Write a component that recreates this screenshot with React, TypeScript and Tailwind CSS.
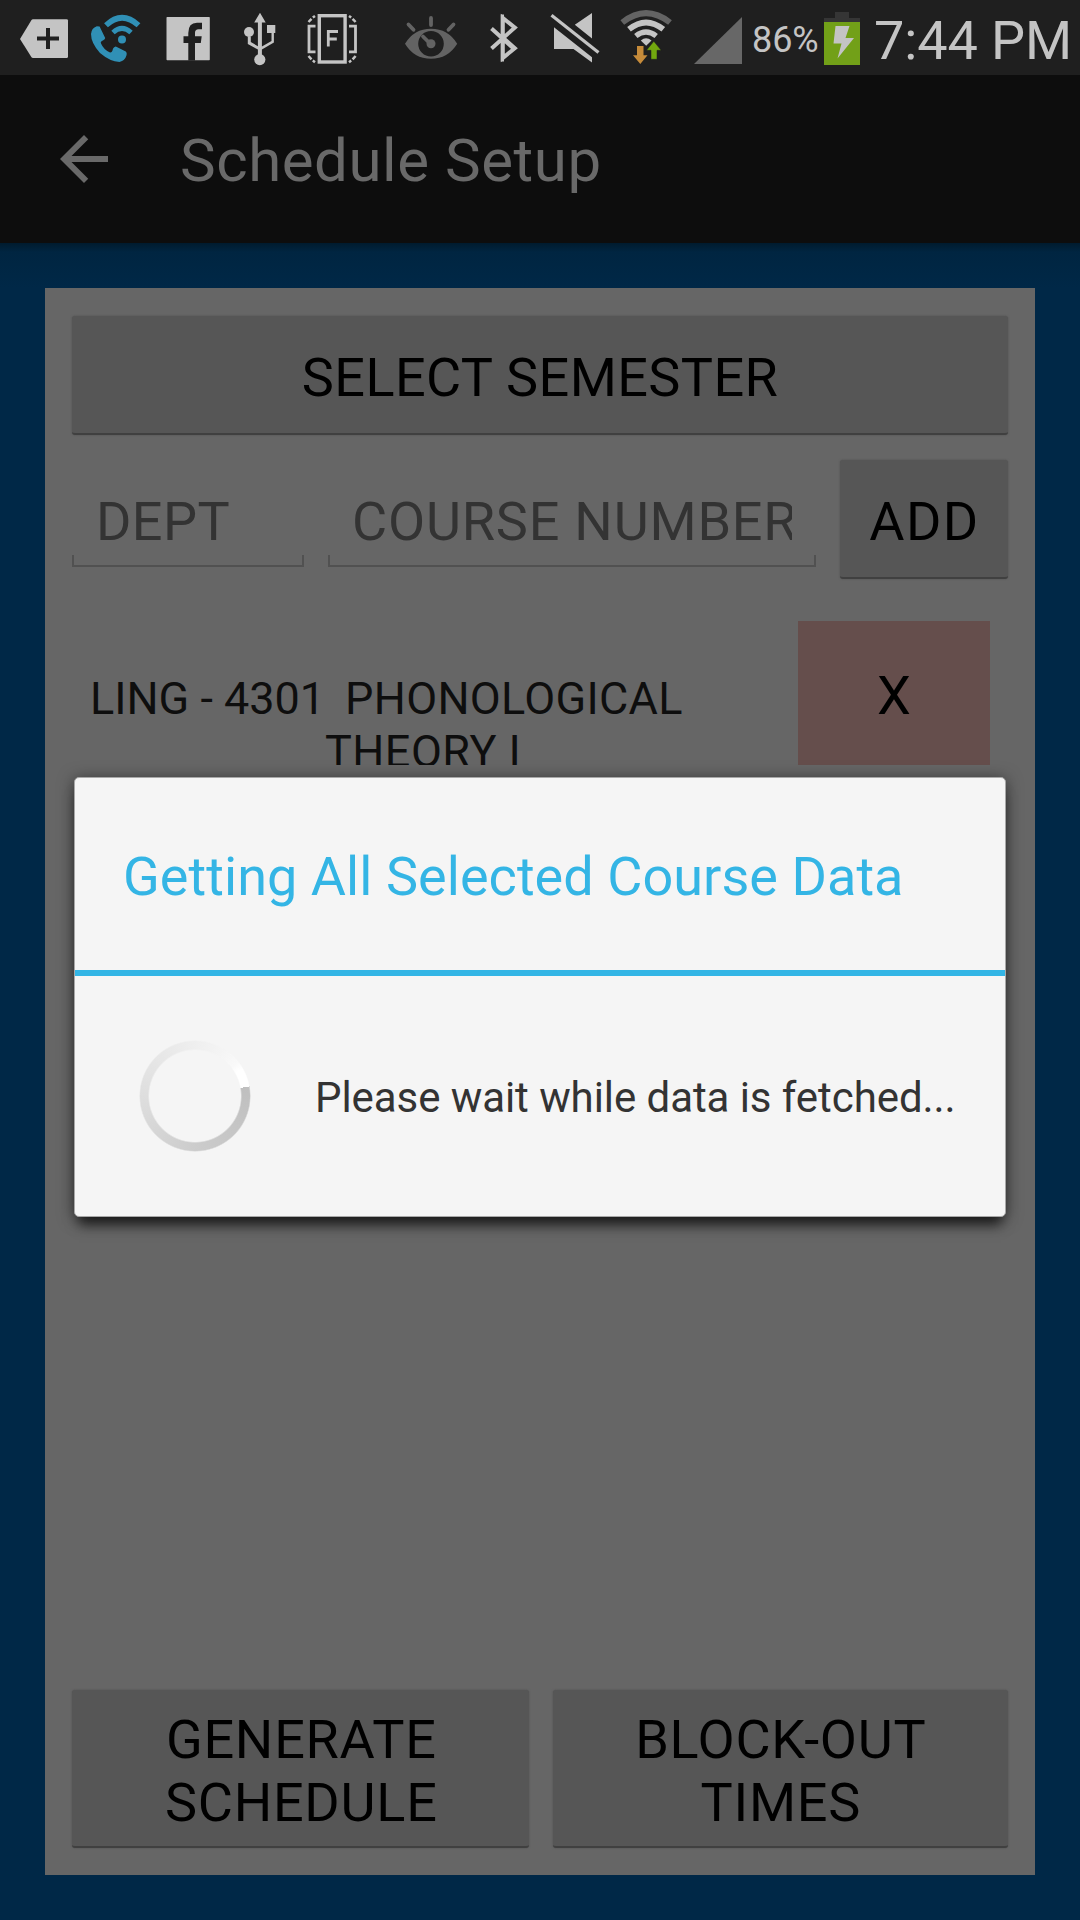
import type { ReactNode } from "react";

function Icon({ w, x, children }: { w: number; x: number; children: ReactNode }) {
  return (
    <svg width={w} height={75} viewBox={`${x} 0 ${w} 75`} className="block shrink-0" fill="#c4c4c4">
      {children}
    </svg>
  );
}

function StatusBar() {
  return (
    <div className="flex h-[75px] shrink-0 items-center bg-[#1f1f1f] pl-[14px]">
      <Icon x={14} w={68}>
        <path d="M20 39 L31.5 20 Q32 19.3 33 19.3 H66.5 Q68 19.3 68 20.5 V56.5 Q68 58 66.5 58 H33 Q32 58 31.5 57.3 Z" />
        <path d="M37 36.6H46V28H50V36.6H59V40.6H50V49H46V40.6H37Z" fill="#1f1f1f" />
      </Icon>
      <Icon x={82} w={68}>
        <g fill="#3090b6">
          <path d="M96.8 26.2 L99.6 26.6 L105.2 38 Q105 39.3 103.3 40.3 Q100 41.5 101 43.5 Q103.5 49.3 109.5 52.3 Q111.7 53 112.5 50.5 Q113.2 47 115.8 46.6 L125.8 51.5 Q127.2 52.5 126.6 55 Q125 60.8 119.5 62 Q110 61.5 100 53 Q91 43 91 34 Q91.5 28 96.8 26.2Z" />
          <circle cx="122" cy="39.4" r="4" />
        </g>
        <path d="M113 32.5 Q122 24.4 131 32.5" fill="none" stroke="#3090b6" strokeWidth="5" />
        <path d="M106 25.2 Q122 10.2 138.5 25.2" fill="none" stroke="#3090b6" strokeWidth="5.6" />
      </Icon>
      <Icon x={150} w={78}>
        <rect x="166.5" y="17" width="43.3" height="43.3" rx="0.7" />
        <path d="M188.3 60.5V43H183.5V36.2H188.3V33Q188.3 22.8 197 22.8H202V29.2H198.5Q195 29.2 195 32.8V36.2H201.7L200.8 43H195V60.5Z" fill="#1f1f1f" />
      </Icon>
      <Icon x={228} w={72}>
        <path d="M260 12.8L265.7 22.5H261.9V46.5L271.5 41V33H267V25H275.3V33H273.9V42.6L261.9 49.6V55H257.9V49.6L247.8 44V36.5H250.8V42L257.9 46.2V22.5H254.2Z" />
        <circle cx="249" cy="32" r="5" />
        <circle cx="259.8" cy="59.6" r="5.6" />
      </Icon>
      <Icon x={300} w={100}>
        <g fill="none" stroke="#c4c4c4">
          <rect x="319.3" y="15.7" width="25.8" height="46.3" strokeWidth="3.4" />
          <path d="M315.5 26.2H309V51.8H315.5M349 26.2H355.5V51.8H349" strokeWidth="2.8" />
          <path d="M308.5 22L311.5 18.8M312.8 17.6L315 16M349 16L351.2 17.6M352.6 18.8L355.6 22M308.5 56L311.5 59.4M312.8 60.6L315 62.2M349 62.2L351.2 60.6M352.6 59.4L355.6 56" strokeWidth="2.5" />
        </g>
        <path d="M328.3 46.5V31.5H338M328.3 39H336.8" fill="none" stroke="#c4c4c4" strokeWidth="2.8" />
      </Icon>
      <Icon x={400} w={80}>
        <g fill="#636363">
          <path fillRule="evenodd" d="M405 43.8Q414 28.8 431 28.8T457.2 43.8Q448 58.8 431 58.8T405 43.8ZM431 31A12.8 12.8 0 1 0 431 56.6A12.8 12.8 0 1 0 431 31Z" />
          <circle cx="431" cy="43.8" r="4.5" />
          <path d="M423 36.5L428 41.5M431 18V25M408.5 24.5L413.5 29.8M453.5 24.5L448.5 29.8" stroke="#636363" strokeWidth="3.8" strokeLinecap="round" />
        </g>
      </Icon>
      <Icon x={480} w={60}>
        <path d="M491.5 28.5L512.8 47.8M491.5 48.5L514.8 27.5L502.8 18V58L514.8 48.2L501 36" fill="none" stroke="#c4c4c4" strokeWidth="4" />
        <path d="M500.8 14.5H504V61.5H500.8Z" />
      </Icon>
      <Icon x={540} w={70}>
        <path d="M592 13V38.5L574.8 24.8ZM554 27.3L592 57.2V62.5L573.5 49H554Z" />
        <path d="M551.5 15.3L598.5 52.5" stroke="#c4c4c4" strokeWidth="3.2" />
      </Icon>
      <Icon x={610} w={74}>
        <g fill="none" stroke="#c4c4c4">
          <path d="M622.3 22.5Q646 3.8 670 22.5" stroke="#636363" strokeWidth="6" />
          <path d="M629 29.3Q646 15.5 663.3 29.3" strokeWidth="5.8" />
          <path d="M635.8 36Q646 28 656.2 36" strokeWidth="5.4" />
        </g>
        <path d="M640.8 40.5Q646 36.2 651.5 40.5L646.2 45.8Z" />
        <path d="M637 46H643.5V55.3H647.5L640.3 64L633 55.3H637Z" fill="#c68b3a" />
        <path d="M651 59.3V50.3H646.5L653.8 41.3L661.2 50.3H657V59.3Z" fill="#72a70f" stroke="#1f1f1f" strokeWidth="0.5" />
      </Icon>
      <Icon x={684} w={68}>
        <path d="M694 64L742 17V64Z" fill="#676767" />
      </Icon>
      <span className="w-[72px] pt-[4px] text-[36px] tracking-[-0.1px] text-[#c4c4c4]">86%</span>
      <Icon x={824} w={50}>
        <path d="M835 12H849V18H860V22.5H824V18H835Z" fill="#353535" />
        <path d="M824 22H860V65H824Z" fill="#72a018" />
        <path d="M835.5 26H849.5L845.5 38H854L837.5 58.5L841.5 43.5H833.5Z" />
      </Icon>
      <span className="whitespace-nowrap pt-[7px] text-[54px] leading-none tracking-[-0.1px] text-[#c4c4c4]">7:44 PM</span>
    </div>
  );
}

function AppBar() {
  return (
    <div className="flex h-[168px] shrink-0 items-center bg-[#0d0d0d] pl-12">
      <svg width="72" height="72" viewBox="0 0 24 24" fill="#696969">
        <path d="M20 11H7.83l5.59-5.59L12 4l-8 8 8 8 1.41-1.41L7.83 13H20v-2z" />
      </svg>
      <h1 className="pl-[60px] pt-[4px] text-[60px] font-normal tracking-[0.55px] text-[#696969]">Schedule Setup</h1>
    </div>
  );
}

function HoloButton({ className, children }: { className: string; children: ReactNode }) {
  return (
    <button
      className={`flex items-center justify-center rounded-[3px] border-b-2 border-[#404040] bg-[#565656] text-center text-[54px] leading-[63.3px] text-black shadow-[0_0_2px_#4e4e4e] ${className}`}
    >
      {children}
    </button>
  );
}

function Field({ className, children }: { className: string; children: ReactNode }) {
  return (
    <div className={`flex h-[119px] flex-col ${className}`}>
      <div className="mx-6 h-[95px] overflow-hidden whitespace-nowrap pt-[30px] text-[54px] leading-[63.3px] text-[#333333]">
        {children}
      </div>
      <div className="h-3 border-x-2 border-b-2 border-[#515151]" />
    </div>
  );
}

function ProgressDialog() {
  return (
    <div className="absolute left-[74px] top-[777px] flex h-[440px] w-[932px] flex-col rounded-[5px] border border-[#a8a8a8] bg-[#f5f5f5] shadow-[0_13px_12px_-5px_rgba(0,0,0,0.6),0_2px_16px_rgba(0,0,0,0.5)]">
      <div className="flex h-[192px] items-center whitespace-nowrap pl-[48px] pt-[4px] text-[54px] tracking-[0.05px] text-[#34b5e5]">
        Getting All Selected Course Data
      </div>
      <div className="h-[6px] shrink-0 bg-[#33b5e5]" />
      <div className="flex flex-1 items-center">
        <div className="ml-[64px] size-[112px] rounded-full bg-[conic-gradient(from_80deg,#bfbfbf_0deg,#cbcbcb_95deg,#dcdcdc_180deg,#ebebeb_260deg,#f4f4f4_310deg,#f9f9f9_332deg,#ffffff_340deg,#ffffff_360deg)] [mask-image:radial-gradient(circle,transparent_45.5px,black_47px,black_54.5px,transparent_56px)]" />
        <span className="whitespace-nowrap pl-[64px] pt-[3px] text-[42px] tracking-[-0.07px] text-[#333333]">
          Please wait while data is fetched...
        </span>
      </div>
    </div>
  );
}

export default function App() {
  return (
    <div className="relative flex h-[1920px] w-[1080px] flex-col overflow-hidden bg-[#002847] font-['Roboto',sans-serif]">
      <StatusBar />
      <AppBar />
      <div className="h-[45px] shrink-0 bg-linear-to-b from-[#001b2e] via-[#002541] via-20% to-[#002847]" />
      <main className="mx-[45px] flex h-[1587px] flex-col bg-[#666666] px-[27px] pt-7">
        <HoloButton className="h-[119px] pt-[7px] tracking-[0.4px]">SELECT SEMESTER</HoloButton>
        <div className="mt-[25px] flex gap-6">
          <Field className="w-[232px] tracking-[0.4px]">DEPT</Field>
          <Field className="w-[488px] tracking-[0.8px]">COURSE NUMBER</Field>
          <HoloButton className="h-[119px] w-[168px] pl-px pt-[6px] tracking-[1.4px]">ADD</HoloButton>
        </div>
        <div className="mt-[42px] flex h-[144px] justify-between overflow-hidden pl-[18px] pr-[18px]">
          <div className="whitespace-pre pt-[51px] text-[45px] leading-[53px] text-[#0e0e0e]">
            <div>LING - 4301<span className="tracking-[-1.2px]">{"  "}</span><span className="tracking-[0.3px]">PHONOLOGICAL</span></div>
            <div className="pl-[235px] tracking-[0.45px]">THEORY I</div>
          </div>
          <div className="flex w-48 items-center justify-center bg-[#654e4c] pt-[5px] text-[54px] text-black">X</div>
        </div>
        <div className="mt-auto mb-[27px] flex gap-6">
          <HoloButton className="h-[158px] flex-1 pl-[2px] pt-[6px] tracking-[0.75px]">GENERATE<br />SCHEDULE</HoloButton>
          <HoloButton className="h-[158px] flex-1 pl-px pt-[6px] tracking-[0.7px]">BLOCK-OUT<br />TIMES</HoloButton>
        </div>
      </main>
      <ProgressDialog />
    </div>
  );
}
